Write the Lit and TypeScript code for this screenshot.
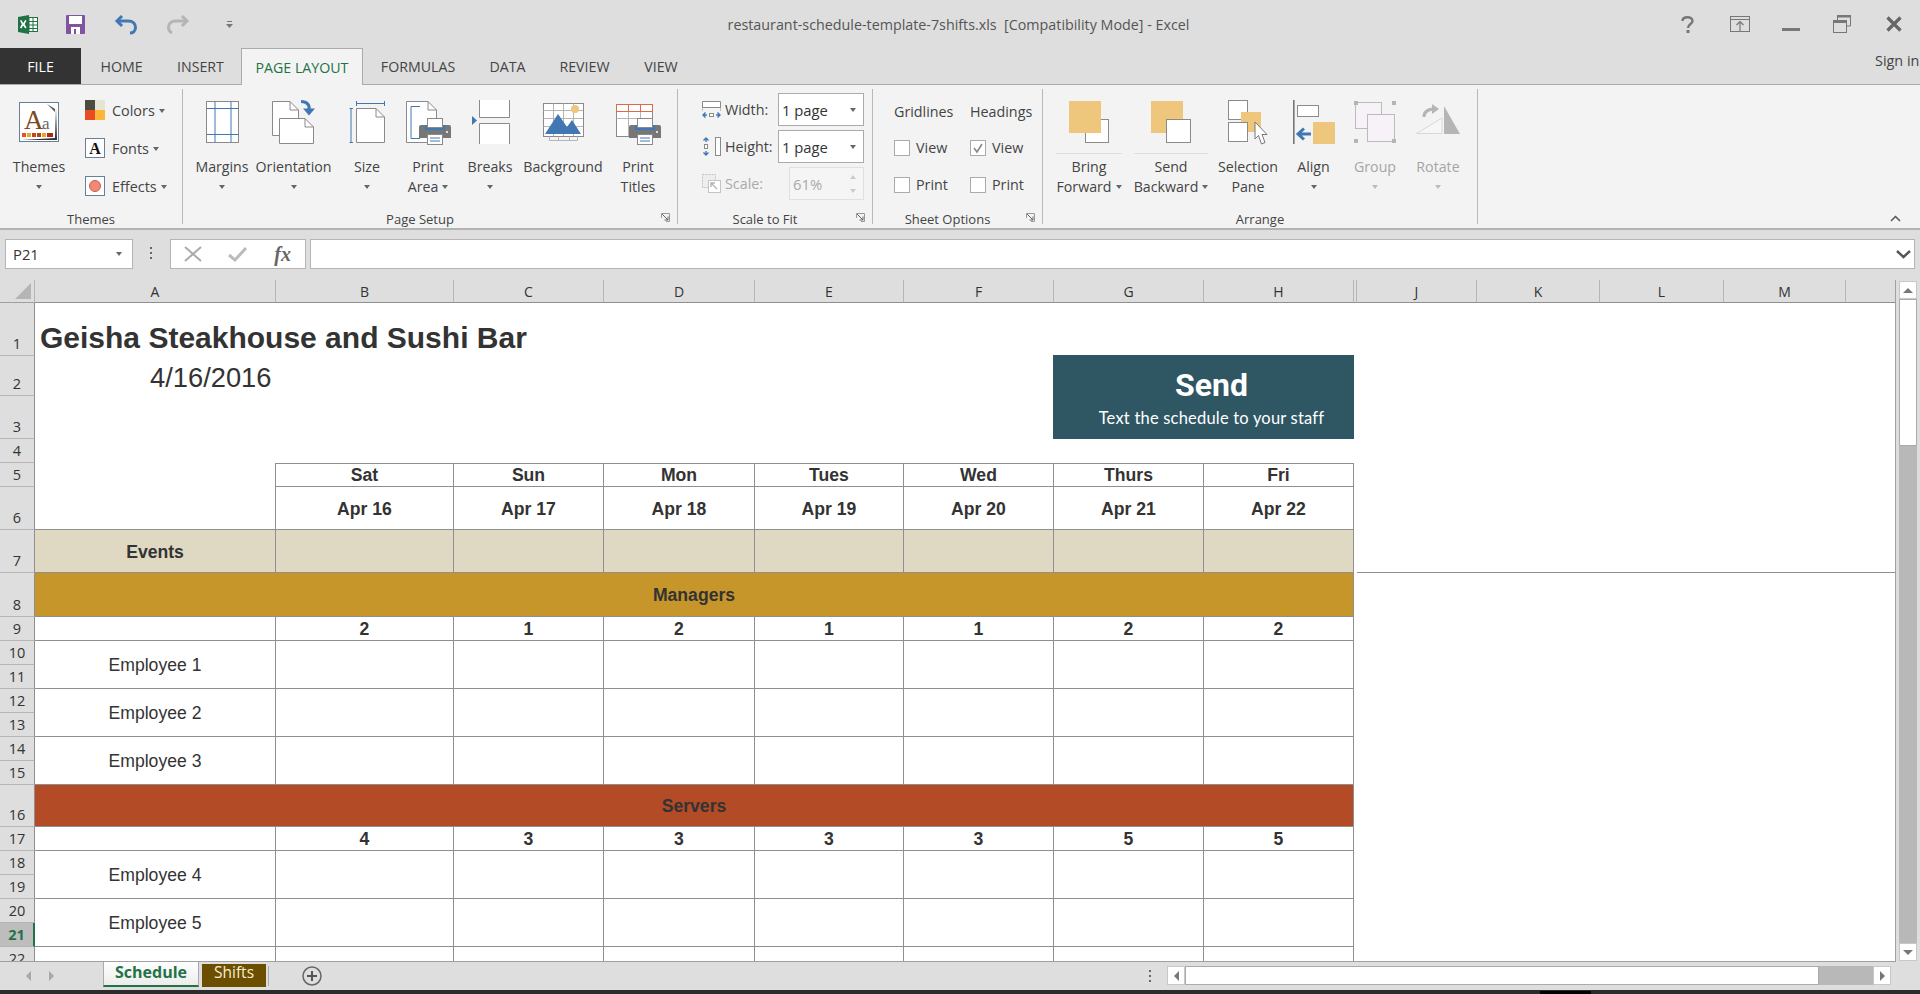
import {LitElement, html, css, svg} from "lit";
import {customElement} from "lit/decorators.js";

const BLUE = "#4178b3";
const GREY = "#8a8a8a";
const GOLD = "#eec67c";

const page = (x: number, y: number, w: number, h: number, f = 9) => svg`
  <path d="M${x + .5} ${y + .5}H${x + w - f}L${x + w - .5} ${y + f}V${y + h - .5}H${x + .5}Z" fill="#fff" stroke=${GREY}/>
  <path d="M${x + w - f} ${y + .5}V${y + f}H${x + w - .5}" fill="none" stroke=${GREY}/>`;

const printer = (x: number) => svg`
  <path d="M${x} 27a2 2 0 0 1 2-2H${x + 30}a2 2 0 0 1 2 2V38H${x}Z" fill="#777"/>
  <rect x=${x + 6} y="25" width="20" height="5" fill=${BLUE}/>
  <rect x=${x + 8.5} y="18.500" width="15" height="9" fill="#fff" stroke=${GREY}/>
  <rect x=${x + 8.5} y="34.500" width="15" height="10" fill="#fff" stroke=${GREY}/>
  <path d="M${x + 11} 38h10M${x + 11} 41h10" stroke=${BLUE}/>
  <rect x=${x + 27} y="31" width="2" height="2" fill="#ddd"/>`;

const ICONS: Record<string, [number, unknown]> = {
  margins: [33, svg`
    <rect x=".5" y="1.500" width="32" height="41" fill="#fff" stroke=${GREY}/>
    <path d="M9 1.500V42.500M25 1.500V42.500M.5 8.500H32.500M.5 34.500H32.500" stroke=${BLUE} fill="none"/>`],
  orientation: [44, svg`
    ${page(0, 1, 27, 35, 9)}
    ${page(7, 18, 35, 26, 9)}
    <path d="M29 1.500C35 1.500 38 5 37 10" fill="none" stroke=${BLUE} stroke-width="3"/>
    <path d="M31 8.500L37 15.500L43 8.500Z" fill=${BLUE}/>`],
  size: [37, svg`
    <path d="M7 3.500H36M7.500 1V6M35.500 1V6M2 8.500V43M.5 8.500H4M.5 42.500H4" stroke=${BLUE} fill="none"/>
    ${page(7, 8, 29, 35, 9)}`],
  printArea: [45, svg`
    ${page(0, 1, 31, 42, 9)}
    <path d="M14 6.500H5V38.500H14" fill="none" stroke=${BLUE}/>
    ${printer(13)}`],
  breaks: [39, svg`
    <path d="M8.500 0V17.500H38.500V0" fill="#fff" stroke=${GREY}/>
    <path d="M8.500 44V23.500H38.500V44" fill="#fff" stroke=${GREY}/>
    <path d="M1 16L6 20.500L1 25Z" fill=${BLUE}/>`],
  background: [41, svg`
    <rect x=".5" y="3.500" width="40" height="33" fill="#fff" stroke=${GREY}/>
    <path d="M.5 10.500H40M.5 18.500H40M.5 26.500H40M10.500 3.500V36M20.500 3.500V36M30.500 3.500V36M6.500 36.500V40.500H34.500V36.500M15.500 36.500V40.500M26.500 36.500V40.500" fill="none" stroke="#b5b5b5"/>
    <circle cx="32" cy="9" r="4" fill=${GOLD}/>
    <path d="M2 34L15 14L24 27L29 20L38 34Z" fill=${BLUE}/>`],
  printTitles: [45, svg`
    <rect x=".5" y="4.500" width="36" height="32" fill="#fff" stroke=${GREY}/>
    <path d="M.5 18.500H36M12.500 11V36M24.500 11V36" fill="none" stroke="#b5b5b5"/>
    <path d="M.5 4.500H36.500V11.500H.5ZM12.500 4.500V11.500M24.500 4.500V11.500" fill="#fff" stroke="#e0694a"/>
    ${printer(13)}`],
  bring: [40, svg`
    <rect x="16.500" y="19.500" width="23" height="23" fill="#fff" stroke=${GREY}/>
    <rect x="0" y="1" width="32" height="32" fill=${GOLD}/>`],
  send: [40, svg`
    <rect x="0" y="1" width="32" height="32" fill=${GOLD}/>
    <rect x="15.500" y="19.500" width="24" height="23" fill="#fff" stroke=${GREY}/>`],
  selection: [40, svg`
    <rect x=".5" y=".5" width="19" height="19" fill="#fff" stroke=${GREY}/>
    <rect x=".5" y="22.500" width="19" height="19" fill="#fff" stroke=${GREY}/>
    <path d="M13 12H33V32H20V22H13Z" fill=${GOLD}/>
    <path d="M27 22V39L30.500 35.500L33.500 44L37 42.500L34 34.500H39Z" fill="#fff" stroke="#777"/>`],
  align: [42, svg`
    <rect x="0" y="0" width="1.600" height="44" fill="#777"/>
    <rect x="4.500" y="5.500" width="21" height="11" fill="#fff" stroke=${GREY}/>
    <rect x="20" y="22" width="22" height="22" fill=${GOLD}/>
    <path d="M5 34H18M11 28.500L5 34L11 39.500" fill="none" stroke=${BLUE} stroke-width="3"/>`],
  group: [42, svg`
    <rect x="1.500" y="2.500" width="26" height="26" fill="#f6f2f8" stroke="#bbb"/>
    <rect x="13.500" y="14.500" width="27" height="27" fill="#f6f2f8" stroke="#bbb"/>
    <path d="M0 1h4v4H0ZM38 1h4v4H38ZM0 39h4v4H0ZM38 39h4v4H38Z" fill="#b5b5b5"/>`],
  rotate: [44, svg`
    <path d="M.5 33.500L26 18V33.500Z" fill="#f6f6f6" stroke="#d8d8d8"/>
    <path d="M28 6L44 34H28Z" fill="#b5b5b5"/>
    <path d="M8 17C8 11 12 9 19 9" fill="none" stroke="#b5b5b5" stroke-width="3"/>
    <path d="M16 4L23 9L16 14Z" fill="#b5b5b5"/>`],
};

interface Btn {
  icon: string;
  lines: string[];
  w: number;
  ml?: number;
  caret?: boolean;
  off?: boolean;
}

const PAGE_SETUP: Btn[] = [
  {icon: "margins", lines: ["Margins"], w: 68, ml: 5, caret: true},
  {icon: "orientation", lines: ["Orientation"], w: 75, caret: true},
  {icon: "size", lines: ["Size"], w: 72, caret: true},
  {icon: "printArea", lines: ["Print", "Area"], w: 50, caret: true},
  {icon: "breaks", lines: ["Breaks"], w: 74, caret: true},
  {icon: "background", lines: ["Background"], w: 72},
  {icon: "printTitles", lines: ["Print", "Titles"], w: 78},
];

const ARRANGE: Btn[] = [
  {icon: "bring", lines: ["Bring", "Forward"], w: 66, ml: 13, caret: true},
  {icon: "send", lines: ["Send", "Backward"], w: 74, ml: 12, caret: true},
  {icon: "selection", lines: ["Selection", "Pane"], w: 66, ml: 7},
  {icon: "align", lines: ["Align"], w: 57, ml: 4, caret: true},
  {icon: "group", lines: ["Group"], w: 54, ml: 6, caret: true, off: true},
  {icon: "rotate", lines: ["Rotate"], w: 60, ml: 6, caret: true, off: true},
];

const COLUMNS = ["A", "B", "C", "D", "E", "F", "G", "H", "", "J", "K", "L", "M"];
const ROW_HEIGHTS = [53, 40, 43, 24, 24, 43, 43, 44, 24, 24, 24, 24, 24, 24, 24, 42, 24, 24, 24, 24, 24, 24];
const DAYS = ["Sat", "Sun", "Mon", "Tues", "Wed", "Thurs", "Fri"];
const DATES = ["Apr 16", "Apr 17", "Apr 18", "Apr 19", "Apr 20", "Apr 21", "Apr 22"];
const DAY_COLS = DAYS.map((_, i) => i + 3);

@customElement("app-root")
export class AppRoot extends LitElement {
  static styles = css`
    :host {
      display: block;
      font-family: "Open Sans", sans-serif;
      color: #444;
    }
    .app {
      width: 1920px;
      height: 994px;
      display: flex;
      flex-direction: column;
      background: #dedede;
      overflow: hidden;
    }
    svg { display: block; overflow: visible; }

    .title-bar {
      height: 48px;
      flex: none;
      position: relative;
      display: flex;
      align-items: center;
    }
    .qat { display: flex; align-items: center; padding-left: 18px; }
    .qat svg { flex: none; }
    .doc-title {
      position: absolute;
      left: 0;
      width: 1917px;
      top: 15px;
      text-align: center;
      font-size: 14.3px;
      line-height: 20px;
      color: #555;
      white-space: pre;
    }
    .win { margin-left: auto; display: flex; align-items: center; padding-right: 18px; }

    .tabs { height: 36px; flex: none; display: flex; position: relative; }
    .tab {
      display: flex;
      align-items: center;
      justify-content: center;
      font-size: 14.2px;
      color: #444;
    }
    .tab.file { background: #333; color: #fff; }
    .tab.active {
      background: #f3f3f3;
      color: #217346;
      border: 1px solid #ababab;
      border-bottom: none;
      height: 37px;
      box-sizing: border-box;
      position: relative;
      z-index: 1;
      margin-left: 2px;
    }
    .sign-in {
      position: absolute;
      left: 1875px;
      top: 4px;
      font-size: 14.4px;
      line-height: 18px;
      white-space: nowrap;
    }

    .ribbon {
      height: 146px;
      flex: none;
      box-sizing: border-box;
      background: #f3f3f3;
      border-top: 1px solid #ababab;
      border-bottom: 2px solid #b3b3b3;
      display: flex;
      padding-top: 4px;
      position: relative;
    }
    .rgroup {
      height: 135px;
      box-sizing: border-box;
      border-right: 1px solid #b8b8b8;
      display: flex;
      flex-direction: column;
      position: relative;
      flex: none;
    }
    .rbody { flex: 1; display: flex; min-height: 0; }
    .rlabel {
      height: 14px;
      line-height: 14px;
      font-size: 13px;
      text-align: center;
      color: #444;
      margin-bottom: -2px;
    }
    .rlabel.launch { padding-right: 20px; }
    .launcher { position: absolute; right: 7px; bottom: 2px; }

    .rb {
      flex: none;
      display: flex;
      flex-direction: column;
      align-items: center;
      font-size: 14.2px;
      line-height: 20px;
      color: #444;
      white-space: nowrap;
    }
    .rb.off { color: #a5a5a5; }
    .rb-icon { height: 68px; box-sizing: border-box; padding-top: 11px; flex: none; }
    .rule { border-top: 1px solid #dedede; margin-top: -4px; height: 3px; align-self: stretch; }
    .caret {
      display: inline-block;
      width: 0;
      height: 0;
      border-top: 4px solid #666;
      border-left: 3px solid transparent;
      border-right: 3px solid transparent;
      vertical-align: 3px;
      margin-left: 4px;
    }
    .rb.off .caret { border-top-color: #bbb; }
    .caret.solo { margin-left: 0; }

    .theme-side {
      display: flex;
      flex-direction: column;
      padding-top: 11px;
      margin-left: 14px;
      gap: 18px;
    }
    .theme-row {
      display: flex;
      align-items: center;
      gap: 7px;
      height: 20px;
      font-size: 14.4px;
      white-space: nowrap;
    }

    .fit { padding: 4px 0 0 24px; display: flex; flex-direction: column; gap: 4px; }
    .fit-row { height: 33px; display: flex; align-items: center; font-size: 14.3px; position: relative; }
    .fit-row.off { color: #aaa; }
    .fit-label { width: 76px; display: flex; align-items: center; gap: 4px; flex: none; }
    .select {
      width: 86px;
      height: 33px;
      box-sizing: border-box;
      border: 1px solid #ababab;
      background: #fff;
      display: flex;
      align-items: center;
      justify-content: space-between;
      padding: 0 7px 0 3px;
      font-size: 14.8px;
      color: #333;
    }
    .select.off {
      width: 75px;
      margin-left: 11px;
      border-color: #e0e0e0;
      background: #f5f5f5;
      color: #aaa;
    }
    .spin { display: flex; flex-direction: column; gap: 10px; }
    .spin .caret { margin: 0; display: block; border-top-color: #ccc; }
    .spin .caret.up { border-top: none; border-bottom: 4px solid #ccc; }

    .opts {
      padding: 12px 0 0 21px;
      display: grid;
      grid-template-columns: 76px 70px;
      grid-template-rows: 39px 37px 37px;
      font-size: 14.3px;
      line-height: 22px;
    }
    .opt { display: flex; align-items: flex-start; gap: 6px; line-height: 16px; }
    .check {
      width: 16px;
      height: 16px;
      flex: none;
      box-sizing: border-box;
      border: 1px solid #ababab;
      background: #fff;
    }

    .formula {
      height: 50px;
      flex: none;
      box-sizing: border-box;
      padding: 9px 5px 0 5px;
      display: flex;
      align-items: flex-start;
    }
    .name-box, .fx-box, .input {
      height: 30px;
      box-sizing: border-box;
      background: #fff;
      border: 1px solid #b5b5b5;
      display: flex;
      align-items: center;
      flex: none;
    }
    .name-box {
      width: 128px;
      padding: 0 10px 0 7px;
      justify-content: space-between;
      font-size: 14.8px;
      color: #333;
    }
    .dots { width: 37px; display: flex; justify-content: center; flex: none; padding-top: 8px; }
    .fx-box { width: 136px; }
    .fx-box svg { position: relative; }
    .fx-slot { width: 45px; display: flex; justify-content: center; }
    .fx-text {
      font-family: "Liberation Serif", serif;
      font-style: italic;
      font-weight: bold;
      font-size: 20px;
      color: #666;
    }
    .input { margin-left: 4px; width: 1605px; justify-content: flex-end; padding-right: 3px; }

    .work { flex: 1; min-height: 0; display: flex; }
    .sheet {
      width: 1896px;
      box-sizing: border-box;
      flex: none;
      border-right: 1px solid #a0a0a0;
      border-bottom: 1px solid #a0a0a0;
      overflow: hidden;
      position: relative;
      background: #fff;
      display: grid;
      grid-template-columns: 35px 241px 178px 150px 151px 149px 150px 150px 150px 3px 120px 123px 124px 122px 1fr;
      align-content: start;
      font-family: "Liberation Sans", Arial, sans-serif;
      color: #333;
    }
    .ch, .rh, .corner {
      background: #dedede;
      box-sizing: border-box;
      font-family: "Open Sans", sans-serif;
      color: #333;
    }
    .corner {
      border-right: 1px solid #b5b5b5;
      border-bottom: 1px solid #a0a0a0;
      display: flex;
      align-items: flex-end;
      justify-content: flex-end;
      padding: 0 3px 3px 0;
    }
    .ch {
      border-right: 1px solid #b5b5b5;
      border-bottom: 1px solid #8f8f8f;
      display: flex;
      align-items: center;
      justify-content: center;
      font-size: 14px;
    }
    .rh {
      border-bottom: 1px solid #b5b5b5;
      border-right: 1px solid #8f8f8f;
      display: flex;
      align-items: flex-end;
      justify-content: center;
      font-size: 14.5px;
      line-height: 22px;
    }
    .rh.sel {
      background: #bdbdbd;
      color: #217346;
      font-weight: 700;
      border-right: 2px solid #217346;
    }
    .cell {
      box-sizing: border-box;
      display: flex;
      align-items: center;
      justify-content: center;
      font-size: 17.6px;
      white-space: nowrap;
      min-width: 0;
      padding-top: 2px;
    }
    .b { font-weight: 700; }
    .day { padding-top: 0; }
    .bd-r { border-right: 1px solid #8f8f8f; }
    .bd-b { border-bottom: 1px solid #8f8f8f; }
    .bd-t { border-top: 1px solid #8f8f8f; }
    .events { background: #dfd9c4; }
    .managers { background: #c7962b; }
    .servers { background: #b34c26; }
    .name {
      font-size: 30px;
      font-weight: 700;
      align-items: flex-end;
      justify-content: flex-start;
      padding: 0 0 1px 5px;
    }
    .when { font-size: 27.3px; justify-content: flex-start; padding: 3px 0 0 115px; }
    .send {
      position: absolute;
      left: 1053px;
      top: 75px;
      width: 301px;
      height: 84px;
      box-sizing: border-box;
      padding-left: 16px;
      background: #2e5663;
      color: #fff;
      display: flex;
      flex-direction: column;
      align-items: center;
    }
    .send b { font-family: Roboto, sans-serif; font-size: 32px; line-height: 36px; margin-top: 12px; }
    .send span { font-family: Lato, sans-serif; font-size: 16.5px; line-height: 22px; margin-top: 4px; letter-spacing: .2px; }

    .vbar {
      width: 18px;
      margin: 1px 3px 1px 3px;
      flex: none;
      display: flex;
      flex-direction: column;
      background: #b8b8b8;
    }
    .sb-btn {
      background: #fff;
      border: 1px solid #c8c8c8;
      box-sizing: border-box;
      display: flex;
      align-items: center;
      justify-content: center;
      flex: none;
    }
    .vbar .sb-btn { height: 18px; }
    .vthumb { height: 147px; flex: none; background: #fff; border: 1px solid #ababab; box-sizing: border-box; }
    .vtrack { flex: 1; }
    .tri-u { width: 0; height: 0; border: 5px solid transparent; border-top: none; border-bottom: 5px solid #777; }
    .tri-d { width: 0; height: 0; border: 5px solid transparent; border-bottom: none; border-top: 5px solid #777; }
    .tri-l { width: 0; height: 0; border: 5px solid transparent; border-left: none; border-right: 5px solid #777; }
    .tri-r { width: 0; height: 0; border: 5px solid transparent; border-right: none; border-left: 5px solid #777; }

    .bottom {
      height: 28px;
      flex: none;
      display: flex;
      align-items: flex-start;
      position: relative;
    }
    .nav { width: 103px; flex: none; height: 28px; display: flex; align-items: center; gap: 18px; padding-left: 26px; box-sizing: border-box; }
    .nav .tri-l { border-right-color: #a8a8a8; }
    .nav .tri-r { border-left-color: #a8a8a8; }
    .sched {
      width: 96px;
      height: 25px;
      flex: none;
      box-sizing: border-box;
      background: linear-gradient(#fff, #ececec);
      border-left: 1px solid #ababab;
      border-right: 1px solid #ababab;
      border-bottom: 2px solid #217346;
      color: #217346;
      font-weight: 700;
      font-size: 16px;
      text-align: center;
      line-height: 20px;
    }
    .shifts {
      width: 64px;
      height: 23px;
      margin: 2px 0 0 3px;
      flex: none;
      background: #6b4e00;
      color: #f6edd0;
      font-size: 15.5px;
      text-align: center;
      line-height: 17px;
    }
    .tab-sep { width: 1px; height: 20px; background: #ababab; margin: 4px 0 0 2px; flex: none; }
    .plus { margin: 4px 0 0 33px; flex: none; }
    .hdots { position: absolute; left: 1149px; top: 8px; }
    .hbar {
      position: absolute;
      left: 1167px;
      top: 4px;
      width: 724px;
      height: 19px;
      display: flex;
      background: #b8b8b8;
    }
    .hbar .sb-btn { width: 18px; }
    .hthumb { width: 634px; flex: none; background: #fff; border: 1px solid #ababab; box-sizing: border-box; }
    .htrack { flex: 1; }
    .strip { height: 4px; flex: none; background: #2b2b2b; position: relative; }
    .strip i { position: absolute; left: 1540px; width: 51px; top: 1px; height: 3px; background: #000; }
  `;

  private bigButton(b: Btn) {
    const [w, icon] = ICONS[b.icon];
    const solo = b.caret && b.lines.length === 1;
    return html`
      <div class="rb ${b.off ? "off" : ""}" style="width:${b.w}px;margin-left:${b.ml ?? 0}px">
        <div class="rb-icon">
          <svg width=${w} height="44" viewBox="0 0 ${w} 44">${icon}</svg>
        </div>
        ${b.icon === "bring" || b.icon === "send" ? html`<div class="rule"></div>` : ""}
        ${b.lines.map((l, i) => html`<div>${l}${b.caret && !solo && i === b.lines.length - 1 ? html`<span class="caret"></span>` : ""}</div>`)}
        ${solo ? html`<div><span class="caret solo"></span></div>` : ""}
      </div>`;
  }

  private launcher() {
    return html`<svg class="launcher" width="9" height="9" viewBox="0 0 9 9">
      <path d="M.5 5V.5H8.500V8.500H5" fill="none" stroke="#999"/>
      <path d="M1 1L7 7M7 3.500V7H3.500" fill="none" stroke="#666"/>
    </svg>`;
  }

  private cell(row: number, col: number, text: string, cls = "", rows = 1, cols = 1) {
    return html`<div class="cell ${cls}" style="grid-area:${row + 1}/${col}/span ${rows}/span ${cols}">${text}</div>`;
  }

  private renderQat() {
    return html`
      <div class="qat">
        <svg width="20" height="19" viewBox="0 0 20 19">
          <rect x="7" y="2.500" width="12.500" height="14" fill="#fff" stroke="#1f7244"/>
          <path d="M7 6.500H19M7 10H19M7 13.500H19M11 3V16M15 3V16" stroke="#1f7244" fill="none"/>
          <path d="M0 2L11 0V19L0 17Z" fill="#1f7244"/>
          <path d="M2.500 5.500L4.500 9L2.500 13M8 5.500L6 9L8 13M3 5.500L7.500 13M7.500 5.500L3 13" stroke="#fff" stroke-width="1.200" fill="none"/>
        </svg>
        <svg style="margin-left:28px" width="19" height="19" viewBox="0 0 19 19">
          <path d="M1 0H18a1 1 0 0 1 1 1V18a1 1 0 0 1-1 1H1a1 1 0 0 1-1-1V1a1 1 0 0 1 1-1Z" fill="#80559f"/>
          <rect x="3" y="1" width="13" height="8" fill="#fff"/>
          <rect x="5" y="12" width="9" height="7" fill="#fff"/>
          <rect x="8" y="14" width="2" height="5" fill="#80559f"/>
        </svg>
        <svg style="margin-left:30px" width="22" height="19" viewBox="0 0 22 19">
          <path d="M7 1L2 6L7 11" fill="none" stroke=${BLUE} stroke-width="3"/>
          <path d="M3 6H13C18 6 20.500 9 20.500 12.500C20.500 16 18 18 15 18" fill="none" stroke=${BLUE} stroke-width="3"/>
        </svg>
        <svg style="margin-left:30px" width="22" height="19" viewBox="0 0 22 19">
          <path d="M15 1L20 6L15 11" fill="none" stroke="#b5b5b5" stroke-width="3"/>
          <path d="M19 6H9C4 6 1.500 9 1.500 12.500C1.500 16 3 17 5 18" fill="none" stroke="#b5b5b5" stroke-width="3"/>
        </svg>
        <svg style="margin-left:37px" width="7" height="7" viewBox="0 0 7 7">
          <path d="M1 .5H6" stroke="#777"/>
          <path d="M0 3H7L3.500 7Z" fill="#777"/>
        </svg>
      </div>`;
  }

  private renderWin() {
    return html`
      <div class="win">
        <svg width="14" height="17" viewBox="0 0 14 17">
          <path d="M1.500 5C1.500 2.500 3.500 1.200 6.500 1.200C9.500 1.200 11.500 2.800 11.500 5C11.500 8 7 8 7 12" fill="none" stroke="#777" stroke-width="2.400"/>
          <rect x="5.500" y="14" width="3" height="3" fill="#777"/>
        </svg>
        <svg style="margin-left:35px" width="20" height="16" viewBox="0 0 20 16">
          <rect x=".5" y=".5" width="19" height="15" fill="none" stroke="#777"/>
          <path d="M0 3.500H20M10 15V6M6.500 9L10 5.500L13.500 9" fill="none" stroke="#777" stroke-width="1.200"/>
        </svg>
        <svg style="margin-left:32px" width="18" height="18" viewBox="0 0 18 18">
          <rect x="0" y="13" width="18" height="3" fill="#777"/>
        </svg>
        <svg style="margin-left:33px" width="18" height="18" viewBox="0 0 18 18">
          <path d="M4.500 5V.5H17.500V11H14" fill="none" stroke="#777"/>
          <rect x="4" y="0" width="14" height="2.500" fill="#777"/>
          <rect x=".5" y="5.500" width="13" height="12" fill="none" stroke="#777"/>
          <rect x="0" y="5" width="14" height="3" fill="#777"/>
        </svg>
        <svg style="margin-left:35px" width="16" height="16" viewBox="0 0 16 16">
          <path d="M1.500 1.500L14.500 14.500M14.500 1.500L1.500 14.500" stroke="#666" stroke-width="3.200"/>
        </svg>
      </div>`;
  }

  private renderTabs() {
    const plain = [["HOME", 81], ["INSERT", 77]] as const;
    const after = [["FORMULAS", 110], ["DATA", 69], ["REVIEW", 85], ["VIEW", 68]] as const;
    return html`
      <div class="tabs">
        <div class="tab file" style="width:81px">FILE</div>
        ${plain.map(([t, w]) => html`<div class="tab" style="width:${w}px">${t}</div>`)}
        <div class="tab active" style="width:122px">PAGE LAYOUT</div>
        ${after.map(([t, w]) => html`<div class="tab" style="width:${w}px">${t}</div>`)}
        <div class="sign-in">Sign in</div>
      </div>`;
  }

  private renderThemes() {
    return html`
      <div class="rgroup" style="width:183px">
        <div class="rbody">
          <div class="rb" style="width:64px;margin-left:7px">
            <div class="rb-icon" style="padding-top:13px">
              <svg width="40" height="40" viewBox="0 0 40 40">
                <rect x=".5" y=".5" width="39" height="39" fill="#fff" stroke="#6a7f96"/>
                <path d="M37 6L38 38H3L36 36Z" fill="#333"/>
                <path d="M28 2L36 7V10L28 2Z" fill="#555"/>
                <text x="5" y="27" font-family="Liberation Serif, serif" font-size="27" fill="#7c4a22">A</text>
                <text x="23" y="27" font-family="Liberation Serif, serif" font-size="17" fill="#666">a</text>
                <path d="M3 31h4v4H3Z" fill="#e8501f"/>
                <path d="M8 31h4v4H8Z" fill="#f0a030"/>
                <path d="M13 31h4v4H13Z" fill="#c8431c"/>
                <path d="M18 31h4v4H18Z" fill="#a34a1c"/>
                <path d="M23 31h4v4H23Z" fill="#f0a030"/>
                <path d="M28 31h6v4H28Z" fill="#a82a10"/>
              </svg>
            </div>
            <div>Themes</div>
            <div><span class="caret solo"></span></div>
          </div>
          <div class="theme-side">
            <div class="theme-row">
              <svg width="20" height="20" viewBox="0 0 20 20">
                <rect width="10" height="10" fill="#4a4a40"/>
                <rect x="10" width="10" height="10" fill="#e8e4d4"/>
                <rect y="10" width="10" height="10" fill="#e84c22"/>
                <rect x="10" y="10" width="10" height="10" fill="#ffb638"/>
              </svg>
              <span>Colors<span class="caret"></span></span>
            </div>
            <div class="theme-row">
              <svg width="20" height="20" viewBox="0 0 20 20">
                <rect x=".5" y=".5" width="19" height="19" fill="#fff" stroke="#6a7f96"/>
                <text x="10" y="16" text-anchor="middle" font-family="Liberation Serif, serif" font-weight="bold" font-size="16" fill="#111">A</text>
              </svg>
              <span>Fonts<span class="caret"></span></span>
            </div>
            <div class="theme-row">
              <svg width="20" height="20" viewBox="0 0 20 20">
                <rect x=".5" y=".5" width="19" height="19" fill="#fff" stroke="#6a7f96"/>
                <circle cx="10" cy="10" r="5.500" fill="#f08a78" stroke="#d05a48"/>
              </svg>
              <span>Effects<span class="caret"></span></span>
            </div>
          </div>
        </div>
        <div class="rlabel">Themes</div>
      </div>`;
  }

  private renderScale() {
    return html`
      <div class="rgroup" style="width:195px">
        <div class="rbody fit">
          <div class="fit-row">
            <div class="fit-label">
              <svg width="19" height="18" viewBox="0 0 19 18">
                <path d="M.5 .5H18.500V6.500H.5Z" fill="#fff" stroke=${GREY}/>
                <path d="M.5 6.500V10M18.500 6.500V10" stroke=${GREY} stroke-dasharray="1 1"/>
                <path d="M1 14H5M14 14H18M3.500 11.500L1 14L3.500 16.500M15.500 11.500L18 14L15.500 16.500" fill="none" stroke=${BLUE} stroke-width="1.400"/>
                <rect x="7.500" y="12.500" width="4" height="3" fill="#fff" stroke=${GREY}/>
              </svg>
              <span>Width:</span>
            </div>
            <div class="select">1 page<span class="caret solo"></span></div>
          </div>
          <div class="fit-row">
            <div class="fit-label">
              <svg width="19" height="19" viewBox="0 0 19 19">
                <rect x="13.500" y=".5" width="5" height="18" fill="#fff" stroke=${GREY}/>
                <path d="M4 1V5M4 14V18M1.500 3.500L4 1L6.500 3.500M1.500 15.500L4 18L6.500 15.500" fill="none" stroke=${BLUE} stroke-width="1.400"/>
                <rect x="2.500" y="7.500" width="3" height="4" fill="#fff" stroke=${GREY}/>
              </svg>
              <span>Height:</span>
            </div>
            <div class="select">1 page<span class="caret solo"></span></div>
          </div>
          <div class="fit-row off">
            <div class="fit-label">
              <svg width="19" height="19" viewBox="0 0 19 19">
                <rect x=".5" y=".5" width="13" height="13" fill="#eee" stroke="#c4c4c4" stroke-dasharray="2 1"/>
                <rect x="6.500" y="6.500" width="12" height="12" fill="#fff" stroke="#c4c4c4"/>
                <path d="M15 15L9 9M9 13V9H13" fill="none" stroke="#b5b5b5" stroke-width="1.400"/>
              </svg>
              <span>Scale:</span>
            </div>
            <div class="select off">61%
              <div class="spin"><span class="caret up"></span><span class="caret"></span></div>
            </div>
          </div>
        </div>
        <div class="rlabel launch">Scale to Fit</div>
        ${this.launcher()}
      </div>`;
  }

  private renderSheetOptions() {
    const check = svg`<svg width="14" height="14" viewBox="0 0 14 14"><path d="M3 7L6 11L11 3" fill="none" stroke="#888" stroke-width="1.600"/></svg>`;
    return html`
      <div class="rgroup" style="width:170px">
        <div class="rbody opts">
          <div>Gridlines</div>
          <div>Headings</div>
          <div class="opt"><span class="check"></span>View</div>
          <div class="opt"><span class="check">${check}</span>View</div>
          <div class="opt"><span class="check"></span>Print</div>
          <div class="opt"><span class="check"></span>Print</div>
        </div>
        <div class="rlabel launch">Sheet Options</div>
        ${this.launcher()}
      </div>`;
  }

  private renderRibbon() {
    return html`
      <div class="ribbon">
        ${this.renderThemes()}
        <div class="rgroup" style="width:495px">
          <div class="rbody">${PAGE_SETUP.map(b => this.bigButton(b))}</div>
          <div class="rlabel launch">Page Setup</div>
          ${this.launcher()}
        </div>
        ${this.renderScale()}
        ${this.renderSheetOptions()}
        <div class="rgroup" style="width:435px">
          <div class="rbody">${ARRANGE.map(b => this.bigButton(b))}</div>
          <div class="rlabel">Arrange</div>
        </div>
        <svg style="position:absolute;left:1890px;top:130px" width="11" height="7" viewBox="0 0 11 7">
          <path d="M1 6L5.500 1.500L10 6" fill="none" stroke="#555" stroke-width="1.500"/>
        </svg>
      </div>`;
  }

  private renderFormula() {
    return html`
      <div class="formula">
        <div class="name-box">P21<span class="caret solo"></span></div>
        <div class="dots">
          <svg width="3" height="13" viewBox="0 0 3 13">
            <path d="M0 0h2v2H0ZM0 5h2v2H0ZM0 10h2v2H0Z" fill="#666"/>
          </svg>
        </div>
        <div class="fx-box">
          <div class="fx-slot">
            <svg width="18" height="16" viewBox="0 0 18 16">
              <path d="M1 1L17 15M17 1L1 15" stroke="#aaa" stroke-width="2"/>
            </svg>
          </div>
          <div class="fx-slot">
            <svg width="20" height="16" viewBox="0 0 20 16">
              <path d="M1 9L7 14L18 2" fill="none" stroke="#bbb" stroke-width="3"/>
            </svg>
          </div>
          <div class="fx-slot"><span class="fx-text">fx</span></div>
        </div>
        <div class="input">
          <svg width="15" height="9" viewBox="0 0 15 9">
            <path d="M1 1L7.500 7L14 1" fill="none" stroke="#555" stroke-width="2.400"/>
          </svg>
        </div>
      </div>`;
  }

  private renderSheet() {
    const cells = [];
    // row 1-4 free cells
    cells.push(this.cell(1, 2, "Geisha Steakhouse and Sushi Bar", "name", 1, 8));
    cells.push(this.cell(2, 2, "4/16/2016", "when", 1, 8));
    cells.push(this.cell(5, 2, "", "bd-r"));
    cells.push(this.cell(6, 2, "", "bd-r bd-b"));
    DAY_COLS.forEach((c, i) => {
      cells.push(this.cell(5, c, DAYS[i], "b day bd-t bd-r bd-b"));
      cells.push(this.cell(6, c, DATES[i], "b bd-r bd-b"));
      cells.push(this.cell(7, c, "", "events bd-r bd-b"));
    });
    cells.push(this.cell(7, 2, "Events", "b events bd-r bd-b"));
    cells.push(this.cell(7, 11, "", "bd-b", 1, 5));
    cells.push(this.cell(8, 2, "Managers", "b managers bd-r bd-b", 1, 8));
    cells.push(this.cell(16, 2, "Servers", "b servers bd-r bd-b", 1, 8));

    const counts: [number, number[]][] = [[9, [2, 1, 2, 1, 1, 2, 2]], [17, [4, 3, 3, 3, 3, 5, 5]]];
    counts.forEach(([row, vals]) => {
      cells.push(this.cell(row, 2, "", "bd-r bd-b"));
      vals.forEach((v, i) => cells.push(this.cell(row, DAY_COLS[i], String(v), "b bd-r bd-b")));
    });

    const people: [number, string][] = [[10, "Employee 1"], [12, "Employee 2"], [14, "Employee 3"], [18, "Employee 4"], [20, "Employee 5"], [22, ""]];
    people.forEach(([row, name]) => {
      cells.push(this.cell(row, 2, name, "bd-r bd-b", 2));
      DAY_COLS.forEach(c => cells.push(this.cell(row, c, "", "bd-r bd-b", 2)));
    });

    return html`
      <div class="sheet" style="grid-template-rows:23px ${ROW_HEIGHTS.map(h => h + "px").join(" ")} 24px">
        <div class="corner" style="grid-area:1/1">
          <svg width="16" height="16" viewBox="0 0 16 16"><path d="M16 0V16H0Z" fill="#b5b5b5"/></svg>
        </div>
        ${COLUMNS.map((c, i) => html`<div class="ch" style="grid-area:1/${i + 2}">${c}</div>`)}
        <div class="ch" style="grid-area:1/15;border-right:none"></div>
        ${ROW_HEIGHTS.map((_, i) => html`<div class="rh ${i === 20 ? "sel" : ""}" style="grid-area:${i + 2}/1">${i + 1}</div>`)}
        ${cells}
        <div class="send">
          <b>Send</b>
          <span>Text the schedule to your staff</span>
        </div>
      </div>`;
  }

  private renderBottom() {
    return html`
      <div class="bottom">
        <div class="nav"><span class="tri-l"></span><span class="tri-r"></span></div>
        <div class="sched">Schedule</div>
        <div class="shifts">Shifts</div>
        <div class="tab-sep"></div>
        <svg class="plus" width="20" height="20" viewBox="0 0 20 20">
          <circle cx="10" cy="10" r="9" fill="none" stroke="#666" stroke-width="1.500"/>
          <path d="M5 10H15M10 5V15" stroke="#555" stroke-width="2"/>
        </svg>
        <svg class="hdots" width="3" height="13" viewBox="0 0 3 13">
          <path d="M0 0h2v2H0ZM0 5h2v2H0ZM0 10h2v2H0Z" fill="#666"/>
        </svg>
        <div class="hbar">
          <div class="sb-btn"><span class="tri-l"></span></div>
          <div class="hthumb"></div>
          <div class="htrack"></div>
          <div class="sb-btn"><span class="tri-r"></span></div>
        </div>
      </div>`;
  }

  render() {
    return html`
      <div class="app">
        <div class="title-bar">
          ${this.renderQat()}
          <div class="doc-title">restaurant-schedule-template-7shifts.xls  [Compatibility Mode] - Excel</div>
          ${this.renderWin()}
        </div>
        ${this.renderTabs()}
        ${this.renderRibbon()}
        ${this.renderFormula()}
        <div class="work">
          ${this.renderSheet()}
          <div class="vbar">
            <div class="sb-btn"><span class="tri-u"></span></div>
            <div class="vthumb"></div>
            <div class="vtrack"></div>
            <div class="sb-btn"><span class="tri-d"></span></div>
          </div>
        </div>
        ${this.renderBottom()}
        <div class="strip"><i></i></div>
      </div>`;
  }
}
